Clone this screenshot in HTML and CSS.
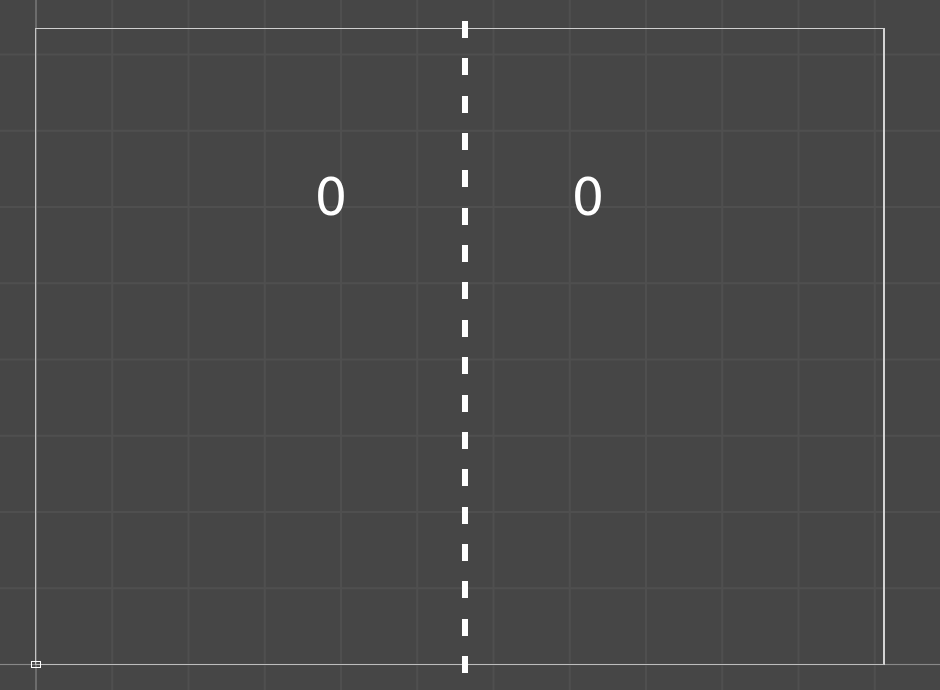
FILE: index.html
```html
<!DOCTYPE html>
<html lang="en">
<head>
<meta charset="utf-8">
<title>Pong</title>
<link rel="stylesheet" href="styles.css">
</head>
<body>
<div class="stage">
  <div class="axis axis-y"></div>
  <div class="axis axis-x"></div>
  <div class="field"></div>
  <div class="net"></div>
  <div class="score score-left">0</div>
  <div class="score score-right">0</div>
  <div class="origin"></div>
</div>
</body>
</html>
```
FILE: styles.css
```css
html, body {
  margin: 0;
  padding: 0;
  background: #464646;
}

.stage {
  position: relative;
  width: 940px;
  height: 690px;
  overflow: hidden;
  background-color: #464646;
  background-image:
    linear-gradient(to right, #4f4f4f 0, #4f4f4f 1.5px, transparent 1.5px),
    linear-gradient(to bottom, #4f4f4f 0, #4f4f4f 1.5px, transparent 1.5px);
  background-size: 76.25px 76.25px;
  background-position: 35px 53.5px;
  font-family: "DejaVu Sans", sans-serif;
}

.axis {
  position: absolute;
}

.axis-y {
  left: 35px;
  top: 0;
  width: 1.5px;
  height: 690px;
  background: #6c6c6c;
}

.axis-x {
  left: 0;
  top: 663.5px;
  width: 940px;
  height: 1.5px;
  background: #888888;
}

.field {
  position: absolute;
  left: 35px;
  top: 27.5px;
  width: 846.5px;
  height: 635px;
  border-top: 1.5px solid #cfcfcf;
  border-left: 1.5px solid #c4c4c4;
  border-right: 2px solid #d4d4d4;
  border-bottom: 1.5px solid #bdbdbd;
}

.net {
  position: absolute;
  left: 462.3px;
  top: 20.7px;
  width: 6.2px;
  height: 652px;
  background: repeating-linear-gradient(to bottom, #ffffff 0, #ffffff 17px, transparent 17px, transparent 37.35px);
}

.score {
  position: absolute;
  top: 171.5px;
  width: 100px;
  font-size: 51px;
  line-height: 51px;
  text-align: center;
  color: #ffffff;
}

.score-left {
  left: 281px;
}

.score-right {
  left: 538px;
}

.origin {
  position: absolute;
  left: 30.5px;
  top: 660.5px;
  width: 8.5px;
  height: 5px;
  border: 1.5px solid #ffffff;
}
```
